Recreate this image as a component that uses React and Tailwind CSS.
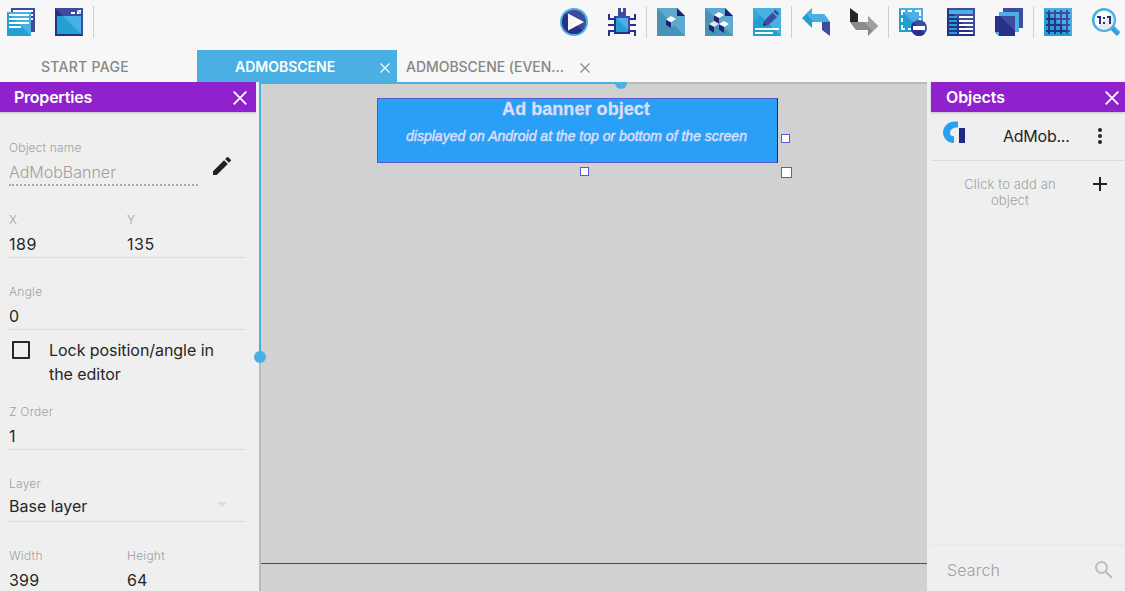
import React from 'react';

const NAVY = '#27318a';
const INDIGO = '#3f4b9c';
const SKY = '#4ab0e4';
const BLUE = '#229fd3';

function Icon({ children }) {
  return (
    <span className="flex h-7 w-12 shrink-0 items-center justify-center">
      <svg width="28" height="28" viewBox="0 0 28 28" className="block overflow-visible">
        {children}
      </svg>
    </span>
  );
}

function Divider() {
  return <span className="-mt-0.5 h-8 w-px shrink-0 bg-[#cfcfcf]" />;
}

function ProjectIcon() {
  return (
    <Icon>
      <path d="M4 0h24v24H4z" fill={INDIGO} />
      <path d="M6 2h20v2H6zM24 6h2v2h-2zM24 10h2v2h-2z" fill="#fff" />
      <path d="M0 4h24v24H0z" fill={BLUE} />
      <path d="M0 4h24v24z" fill={SKY} />
      <path d="M2 6h20v2H2zM2 10h20v2H2zM2 14h20v2H2zM2 18h12v2H2z" fill="#fff" />
    </Icon>
  );
}

function WindowIcon() {
  return (
    <Icon>
      <path d="M0 0h28v28H0z" fill={INDIGO} />
      <path d="M0 0v28h28z" fill={NAVY} />
      <path d="M2 8h24v18H2z" fill={BLUE} />
      <path d="M8 8h18v18z" fill={SKY} />
      <path d="M16 4h4v2h-4zM22 2h4v4h-4z" fill="#fff" />
      <path d="M22 2h2v2h-2zM24 4h2v2h-2z" fill="#8fd0f2" />
    </Icon>
  );
}

function PlayIcon() {
  return (
    <Icon>
      <circle cx="14" cy="14" r="14" fill={SKY} />
      <circle cx="14" cy="14" r="12" fill={INDIGO} />
      <path d="M5.5 5.5a12 12 0 0 0 17 17z" fill={NAVY} />
      <path d="M8 5.5v17L24 14z" fill="#fff" />
      <path d="M8 5.500v17l8.500-8.500z" fill="#ececec" opacity=".6" />
    </Icon>
  );
}

function DebugIcon() {
  return (
    <Icon>
      <path d="M10 0h3v4h2V0h3v8h-8z" fill={INDIGO} />
      <path d="M6 11H1V6M6 17H0M6 23H1v5" fill="none" stroke={NAVY} strokeWidth="2" />
      <path d="M22 11h5V6M22 17h6M22 23h5v5" fill="none" stroke={NAVY} strokeWidth="2" />
      <path d="M6 8h16v18H6z" fill={NAVY} />
      <path d="M6 8h16v16z" fill={INDIGO} />
      <path d="M8 10h12v14H8z" fill={BLUE} />
      <path d="M8 10h12v12z" fill={SKY} />
    </Icon>
  );
}

function Sheet() {
  return (
    <>
      <path d="M0 0h20l8 8v20H0z" fill="#5fa8d2" />
      <path d="M0 0v28h28z" fill="#4891b9" />
      <path d="M20 0v8h8z" fill="#1b2373" />
    </>
  );
}

function ObjectIcon() {
  return (
    <Icon>
      <Sheet />
      <path d="M9 11.5L14 8l5 3-5 3.5z" fill="#fff" />
      <path d="M9 12l5 2.5V20l-5-3z" fill="#1b2373" />
      <path d="M14 14.5l5-3v5L14 20z" fill="#5fa8d2" />
    </Icon>
  );
}

function ObjectGroupsIcon() {
  return (
    <Icon>
      <Sheet />
      <path d="M9 7l5-3 5 3-5 3z" fill="#fff" />
      <path d="M9 7.5l5 2.5v5.5l-5-3z" fill="#1b2373" />
      <path d="M4 16l5-3 5 3-5 3z" fill="#e2e2e2" />
      <path d="M4 16.5L9 19v6l-5-3.5z" fill="#1b2373" />
      <path d="M14 16l5-3 5 3-5 3z" fill="#fff" />
      <path d="M14 16.5l5 2.5v6l-5-3.5z" fill="#1b2373" />
    </Icon>
  );
}

function EditIcon() {
  return (
    <Icon>
      <path d="M0 0h28v28H0z" fill={SKY} />
      <path d="M0 0v28h28z" fill={BLUE} />
      <path d="M0 0h14L0 14z" fill={SKY} opacity=".5" />
      <path d="M10 18l1-5 8.500-8.500 4.500 4.500-8.500 8z" fill={INDIGO} />
      <path d="M20.300 3.600l2-2 4 4-2 2z" fill={INDIGO} />
      <path d="M10 18l.8-3.500 2.700 2.700z" fill={NAVY} />
      <path d="M2 20h24v2H2zM2 24h18v2H2z" fill="#fff" />
    </Icon>
  );
}

function UndoIcon() {
  return (
    <Icon>
      <path d="M0 10L10 0v6h12l6 8H10v6z" fill={BLUE} />
      <path d="M4 6l6-6v6h12l6 8H12z" fill={SKY} />
      <path d="M20 14h8v14l-8-6z" fill={INDIGO} />
    </Icon>
  );
}

function RedoIcon() {
  return (
    <Icon>
      <path d="M0 0l8 6v8H0z" fill="#262626" />
      <path d="M0 14h18V8l10 10-10 10v-6H6z" fill="#8a8a8a" />
      <path d="M14 14h4V8l10 10-5 5z" fill="#a0a0a0" />
    </Icon>
  );
}

function DeselectIcon() {
  return (
    <Icon>
      <path d="M0 0h24v24H0z" fill={SKY} />
      <path d="M0 0v24h24z" fill={BLUE} />
      <path
        d="M3 7V3h3M9 3h4M16 3h5v5M3 10v4M3 17v4h3M9 21h4M21 10v4"
        fill="none"
        stroke="#fff"
        strokeWidth="2"
      />
      <circle cx="20" cy="20" r="8" fill={INDIGO} />
      <path d="M14.300 14.300a8 8 0 0 0 11.400 11.400z" fill={NAVY} />
      <path d="M14 18h12v4H14z" fill="#fff" />
    </Icon>
  );
}

function ListIcon() {
  return (
    <Icon>
      <path d="M0 0h28v28H0z" fill={INDIGO} />
      <path d="M0 0v28h28z" fill={NAVY} />
      <path d="M2 2h24v4H2z" fill={SKY} />
      <path d="M2 8h8v2H2zM2 12h8v2H2zM2 16h8v2H2zM2 20h8v2H2zM2 24h8v2H2z" fill={BLUE} />
      <path d="M12 8h14v2H12zM12 12h14v2H12zM12 16h14v2H12zM12 20h14v2H12zM12 24h14v2H12z" fill="#fff" />
    </Icon>
  );
}

function LayersIcon() {
  return (
    <Icon>
      <path d="M8 0h20v20H8z" fill={INDIGO} />
      <path d="M4 4h20v20H4z" fill={SKY} />
      <path d="M0 8h20v20H4l-4-4z" fill={NAVY} />
      <path d="M5 8h15v15z" fill={INDIGO} />
      <path d="M0 24h4v4z" fill={SKY} />
    </Icon>
  );
}

function GridIcon() {
  return (
    <Icon>
      <path d="M0 0h28v28H0z" fill={SKY} />
      <path d="M0 0v28h28z" fill={BLUE} />
      <path
        d="M5 2v24M11 2v24M17 2v24M23 2v24M2 5h24M2 11h24M2 17h24M2 23h24"
        stroke={INDIGO}
        strokeWidth="2"
        fill="none"
      />
      <path d="M5 5v21M11 11v15M17 17v9M2 11h9M2 17h15M2 23h21" stroke={NAVY} strokeWidth="2" fill="none" />
    </Icon>
  );
}

function ZoomIcon() {
  return (
    <Icon>
      <path d="M19.500 19.500l7 7" stroke="#2c9fd6" strokeWidth="4.500" />
      <path d="M21.500 18.500l6 6" stroke={SKY} strokeWidth="2" />
      <circle cx="12" cy="12" r="10.800" fill="#fff" stroke={SKY} strokeWidth="2.600" />
      <path d="M19 5a9.900 9.900 0 0 1-14 14z" fill="#ebebeb" />
      <path d="M5 9h3v7M15 9h3v7" stroke={NAVY} strokeWidth="2" fill="none" />
      <path d="M11 9h2v2h-2zM11 14h2v2h-2z" fill={NAVY} />
    </Icon>
  );
}

function Cross({ size, className, width = 1.5 }) {
  return (
    <svg width={size} height={size} viewBox="0 0 14 14" className={className}>
      <path d="M.7.7l12.600 12.600M13.300.7L.7 13.300" stroke="currentColor" strokeWidth={width} fill="none" />
    </svg>
  );
}

function Toolbar() {
  return (
    <div className="-ml-[3px] flex h-[50px] shrink-0 items-start pt-2">
      <ProjectIcon />
      <WindowIcon />
      <Divider />
      <div className="w-[456px] shrink-0" />
      <PlayIcon />
      <DebugIcon />
      <Divider />
      <ObjectIcon />
      <ObjectGroupsIcon />
      <EditIcon />
      <Divider />
      <UndoIcon />
      <RedoIcon />
      <Divider />
      <DeselectIcon />
      <ListIcon />
      <LayersIcon />
      <Divider />
      <GridIcon />
      <ZoomIcon />
    </div>
  );
}

function Tabs() {
  return (
    <div className="flex h-8 shrink-0 text-[14px] font-medium leading-8 text-[#868686]">
      <div className="w-[197px] pl-[41px] pt-px tracking-[0.28px]">START PAGE</div>
      <div className="flex w-[200px] items-center bg-[#4ab0e4] pl-[38px] font-semibold text-white">
        <span className="w-[145px] pt-0.5 tracking-[-0.01px]">ADMOBSCENE</span>
        <Cross size={10} className="mt-1" width={1.6} />
      </div>
      <div className="flex items-center pl-[9px]">
        <span className="w-[174px] pt-0.5 tracking-[-0.04px]">ADMOBSCENE (EVEN...</span>
        <Cross size={10} className="mt-1" width={1.6} />
      </div>
    </div>
  );
}

function PanelHeader({ title, className }) {
  return (
    <div
      className={`flex h-[30px] shrink-0 items-center justify-between bg-[#9022cd] text-[16px] font-semibold text-white shadow-[0_1px_2px_rgba(0,0,0,0.2)] ${className}`}
    >
      <span>{title}</span>
      <Cross size={14} className="mt-0.5" width={1.8} />
    </div>
  );
}

function Field({ label, value, className = '', valueClass = 'mt-1 tracking-[0.5px]' }) {
  return (
    <div className={className}>
      <div className="mt-px h-4 text-[12px] font-light leading-4 tracking-[0.25px] text-[#9f9f9f]">{label}</div>
      <div className={`h-6 text-[16px] leading-6 text-[#262626] ${valueClass}`}>{value}</div>
    </div>
  );
}

function Properties() {
  return (
    <div className="flex h-full w-[256px] shrink-0 flex-col overflow-hidden">
      <PanelHeader title="Properties" className="pl-3.5 pr-[9px] tracking-[-0.23px]" />
      <div className="pl-[9px] pr-2.5 pt-[27px]">
        <div className="flex h-[47px]">
          <div className="w-[189px] border-b-2 border-dotted border-[#a8a8a8]">
            <div className="h-[18px] text-[12px] font-light leading-[18px] tracking-[0.15px] text-[#9f9f9f]">
              Object name
            </div>
            <div className="mt-[3px] h-6 text-[16px] font-light leading-6 text-[#a0a0a0]">AdMobBanner</div>
          </div>
          <svg width="24" height="24" viewBox="0 0 24 24" className="ml-3 mt-[15px]" fill="#222">
            <path d="M3 17.250V21h3.750L17.810 9.940l-3.750-3.750L3 17.250zM20.710 7.040a1 1 0 0 0 0-1.410l-2.340-2.340a1 1 0 0 0-1.410 0l-1.830 1.830 3.750 3.750 1.830-1.830z" />
          </svg>
        </div>
        <div className="mt-[25px] flex h-[47px] border-b border-[#dcdcdc]">
          <Field label="X" value="189" className="w-[118px]" />
          <Field label="Y" value="135" />
        </div>
        <div className="mt-[25px] flex h-[47px] border-b border-[#dcdcdc]">
          <Field label="Angle" value="0" />
        </div>
        <div className="flex pt-2">
          <span className="ml-[3px] mt-[3px] h-[18px] w-[18px] rounded-[1px] border-2 border-[#262626]" />
          <span className="ml-[19px] w-[180px] text-[16px] leading-6 tracking-[-0.05px] text-[#262626]">
            Lock position/angle in the editor
          </span>
        </div>
        <div className="mt-[17px] flex h-[47px] border-b border-[#dcdcdc]">
          <Field label="Z Order" value="1" />
        </div>
        <div className="mt-[25px] flex h-[47px] border-b border-[#dcdcdc]">
          <Field label="Layer" value="Base layer" className="w-[208px]" valueClass="mt-0.5" />
          <svg width="10" height="5" viewBox="0 0 10 5" className="mt-[27px]" fill="#dcdcdc">
            <path d="M0 0h10L5 5z" />
          </svg>
        </div>
        <div className="mt-[25px] flex">
          <Field label="Width" value="399" className="w-[118px]" valueClass="mt-1 tracking-[0.2px]" />
          <Field label="Height" value="64" valueClass="mt-1 tracking-[0.2px]" />
        </div>
      </div>
    </div>
  );
}

function Handle({ className }) {
  return <span className={`absolute border border-[#5a5ad8] bg-white ${className}`} />;
}

function SceneCanvas() {
  return (
    <div className="relative ml-[3px] h-full w-[668px] shrink-0 overflow-visible border-l-2 border-t-2 border-[#bababa] bg-[#d1d1d1]">
      <div className="absolute -left-0.5 -top-0.5 h-0.5 w-[362px] bg-[#4ab0e4]" />
      <div className="absolute -left-0.5 -top-0.5 h-[275px] w-0.5 bg-[#4ab0e4]" />
      <div className="absolute left-[354px] top-[-2px] h-[7px] w-3 rounded-b-full bg-[#4ab0e4]" />
      <div className="absolute -left-[7px] top-[267px] h-3 w-3 rounded-full bg-[#4ab0e4]" />
      <div className="absolute left-0 top-[479px] h-px w-full bg-[#4c4c4c]" />
      <div className="absolute left-[116px] top-3.5 h-[65px] w-[401px] border border-[#5757d4] border-r-[#23236f] bg-[#29a0f6] text-center font-['Liberation_Sans',sans-serif] text-[#dcdcfc]">
        <div className="pr-[3px] text-[18px] font-bold leading-5 tracking-[0.05px] [-webkit-text-stroke:0.3px_#dcdcfc]">
          Ad banner object
        </div>
        <div className="mt-[9px] whitespace-nowrap pr-0.5 text-[14px] italic leading-4 tracking-[0.01px] [-webkit-text-stroke:0.5px_#dcdcfc]">
          displayed on Android at the top or bottom of the screen
        </div>
      </div>
      <Handle className="left-[520px] top-[50px] h-[9px] w-[9px]" />
      <Handle className="left-[319px] top-[83px] h-[9px] w-[9px]" />
      <Handle className="left-[520px] top-[83px] h-[11px] w-[11px]" />
    </div>
  );
}

function Objects() {
  return (
    <div className="ml-1 flex h-full w-[194px] shrink-0 flex-col">
      <PanelHeader title="Objects" className="pl-[15px] pr-1.5 tracking-[-0.1px]" />
      <div className="flex h-[49px] items-start border-b border-[#dcdcdc]">
        <svg width="22" height="22" viewBox="0 0 22 22" className="ml-3 mt-[9px]">
          <path d="M15 .5V6.500C9.500 6.200 7 9 7 12c0 2 1.500 3.300 4 3.300V22C4.500 22 0 17 0 11.500S5 .5 11 .5z" fill="#29a0f6" />
          <path d="M16 7h6v15h-6z" fill="#1f2b80" />
        </svg>
        <span className="ml-[38px] mt-3 w-[94px] text-[16px] leading-6 tracking-[-0.25px] text-[#262626]">AdMob...</span>
        <svg width="6" height="18" viewBox="0 0 6 18" className="mt-[15px]" fill="#262626">
          <circle cx="3" cy="3" r="2" />
          <circle cx="3" cy="9" r="2" />
          <circle cx="3" cy="15" r="2" />
        </svg>
      </div>
      <div className="flex pt-4">
        <span className="-mt-px ml-6 w-[110px] text-center text-[13px] font-light leading-4 tracking-[0.12px] text-[#9f9f9f]">
          Click to add an object
        </span>
        <svg width="14" height="14" viewBox="0 0 14 14" className="ml-7">
          <path d="M7 0v14M0 7h14" stroke="#222" strokeWidth="2" />
        </svg>
      </div>
      <div className="mt-auto flex h-[47px] items-center justify-between border-t-2 border-[#e9e9e9] pl-4 pr-3 pt-1">
        <span className="-mt-0.5 text-[16px] font-light tracking-[0.15px] text-[#a0a0a0]">Search</span>
        <svg width="18" height="18" viewBox="0 0 18 18" className="-mt-0.5 block">
          <circle cx="6.500" cy="6.500" r="5.500" stroke="#bdbdbd" strokeWidth="2" fill="none" />
          <path d="M10.500 10.500l6.500 6.500" stroke="#bdbdbd" strokeWidth="2.200" />
        </svg>
      </div>
    </div>
  );
}

export default function App() {
  return (
    <div className="flex h-[591px] w-[1125px] flex-col overflow-hidden bg-[#f7f7f7] font-['Inter',sans-serif]">
      <Toolbar />
      <Tabs />
      <div className="flex min-h-0 flex-1 bg-[#efefef]">
        <Properties />
        <SceneCanvas />
        <Objects />
      </div>
    </div>
  );
}
